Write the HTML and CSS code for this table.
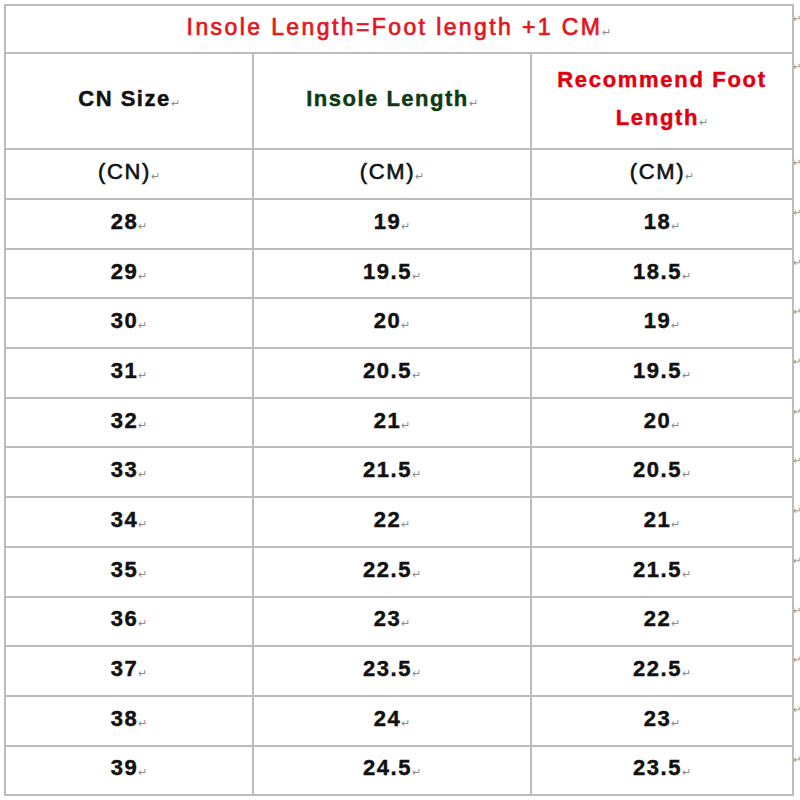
FILE: index.html
```html
<!DOCTYPE html>
<html lang="en">
<head>
<meta charset="utf-8">
<title>Insole Length Size Chart</title>
<link rel="stylesheet" href="styles.css">
</head>
<body>
<table class="size-table">
  <colgroup>
    <col class="c1"><col class="c2"><col class="c3"><col class="c4">
  </colgroup>
  <tbody>
    <tr class="row-title">
      <td colspan="3" class="cell title">Insole Length=Foot length +1 CM<span class="pm">↵</span></td>
      <td class="mark"><span>↵</span></td>
    </tr>
    <tr class="row-head">
      <td class="cell head">CN Size<span class="pm">↵</span></td>
      <td class="cell head green">Insole Length<span class="pm">↵</span></td>
      <td class="cell head red two">Recommend Foot<br>Length<span class="pm">↵</span></td>
      <td class="mark"><span>↵</span></td>
    </tr>
    <tr class="row-unit">
      <td class="cell unit">(CN)<span class="pm">↵</span></td>
      <td class="cell unit">(CM)<span class="pm">↵</span></td>
      <td class="cell unit">(CM)<span class="pm">↵</span></td>
      <td class="mark"><span>↵</span></td>
    </tr>
    <tr class="row"><td class="cell">28<span class="pm">↵</span></td><td class="cell">19<span class="pm">↵</span></td><td class="cell">18<span class="pm">↵</span></td><td class="mark"><span>↵</span></td></tr>
    <tr class="row"><td class="cell">29<span class="pm">↵</span></td><td class="cell">19.5<span class="pm">↵</span></td><td class="cell">18.5<span class="pm">↵</span></td><td class="mark"><span>↵</span></td></tr>
    <tr class="row"><td class="cell">30<span class="pm">↵</span></td><td class="cell">20<span class="pm">↵</span></td><td class="cell">19<span class="pm">↵</span></td><td class="mark"><span>↵</span></td></tr>
    <tr class="row"><td class="cell">31<span class="pm">↵</span></td><td class="cell">20.5<span class="pm">↵</span></td><td class="cell">19.5<span class="pm">↵</span></td><td class="mark"><span>↵</span></td></tr>
    <tr class="row"><td class="cell">32<span class="pm">↵</span></td><td class="cell">21<span class="pm">↵</span></td><td class="cell">20<span class="pm">↵</span></td><td class="mark"><span>↵</span></td></tr>
    <tr class="row"><td class="cell">33<span class="pm">↵</span></td><td class="cell">21.5<span class="pm">↵</span></td><td class="cell">20.5<span class="pm">↵</span></td><td class="mark"><span>↵</span></td></tr>
    <tr class="row"><td class="cell">34<span class="pm">↵</span></td><td class="cell">22<span class="pm">↵</span></td><td class="cell">21<span class="pm">↵</span></td><td class="mark"><span>↵</span></td></tr>
    <tr class="row"><td class="cell">35<span class="pm">↵</span></td><td class="cell">22.5<span class="pm">↵</span></td><td class="cell">21.5<span class="pm">↵</span></td><td class="mark"><span>↵</span></td></tr>
    <tr class="row"><td class="cell">36<span class="pm">↵</span></td><td class="cell">23<span class="pm">↵</span></td><td class="cell">22<span class="pm">↵</span></td><td class="mark"><span>↵</span></td></tr>
    <tr class="row"><td class="cell">37<span class="pm">↵</span></td><td class="cell">23.5<span class="pm">↵</span></td><td class="cell">22.5<span class="pm">↵</span></td><td class="mark"><span>↵</span></td></tr>
    <tr class="row"><td class="cell">38<span class="pm">↵</span></td><td class="cell">24<span class="pm">↵</span></td><td class="cell">23<span class="pm">↵</span></td><td class="mark"><span>↵</span></td></tr>
    <tr class="row"><td class="cell">39<span class="pm">↵</span></td><td class="cell">24.5<span class="pm">↵</span></td><td class="cell">23.5<span class="pm">↵</span></td><td class="mark"><span>↵</span></td></tr>
  </tbody>
</table>
</body>
</html>
```

FILE: styles.css
```css
html, body {
  margin: 0;
  padding: 0;
  background: #ffffff;
  overflow: hidden;
}

body {
  font-family: "Liberation Sans", Arial, sans-serif;
  color: #111111;
}

.size-table {
  margin: 4px 0 0 4px;
  border-collapse: collapse;
  table-layout: fixed;
  width: 796px;
}

.c1 { width: 248px; }
.c2 { width: 278px; }
.c3 { width: 262px; }
.c4 { width: 8px; }

.cell {
  border: 2px solid #bcbcbc;
  padding: 0;
  text-align: center;
  vertical-align: middle;
  font-size: 22px;
  font-weight: bold;
  letter-spacing: 1.5px;
  line-height: 26px;
  white-space: nowrap;
  -webkit-text-stroke: 0.45px currentColor;
}

.row-title { height: 48px; }
.row-head { height: 96px; }
.row-unit { height: 50px; }
.row { height: 49.7px; }

.title {
  color: #e2161e;
  font-size: 23px;
  font-weight: normal;
  letter-spacing: 2.4px;
  -webkit-text-stroke: 0.7px #e2161e;
}

.head.green { color: #0c3a14; }
.head.red { color: #e0000f; letter-spacing: 1.7px; }
.head.two { line-height: 38px; }

.unit {
  font-weight: normal;
  letter-spacing: 1.6px;
  -webkit-text-stroke: 0.6px #111111;
}

.pm {
  font-size: 11px;
  font-weight: normal;
  letter-spacing: 0;
  color: #8c8c8c;
  -webkit-text-stroke: 0;
  vertical-align: -1px;
}

.mark {
  border: none;
  padding: 0;
  vertical-align: top;
  overflow: hidden;
  font-size: 10px;
  line-height: 10px;
  color: #8c8c8c;
}

.mark span {
  display: block;
  margin-top: 9px;
  margin-left: -1px;
}
```
